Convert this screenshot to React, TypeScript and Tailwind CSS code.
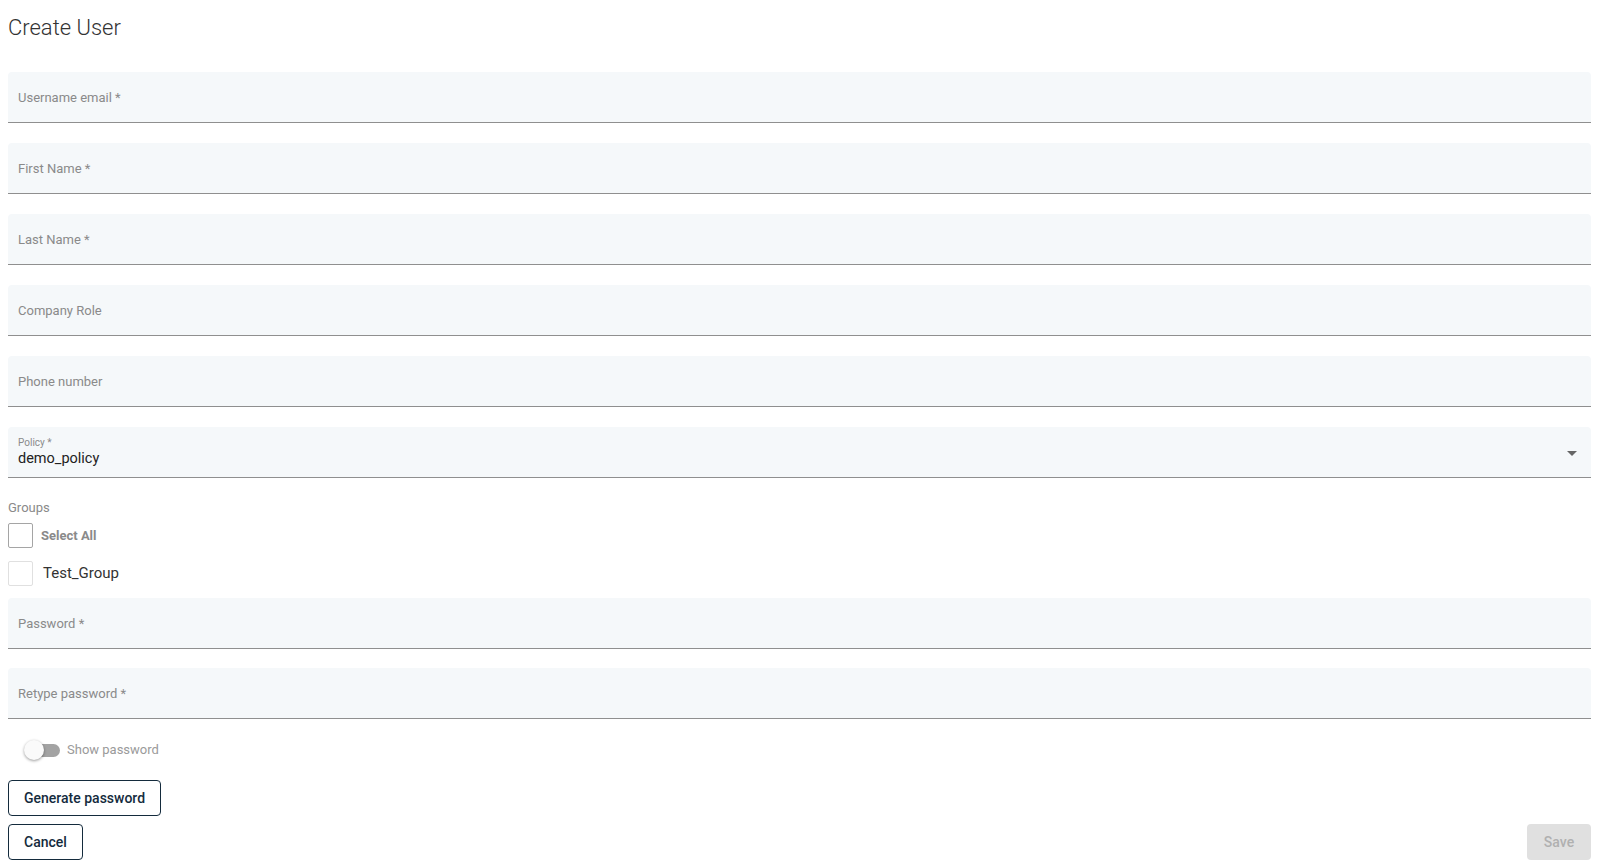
import React from "react";

const font = { fontFamily: "Roboto, 'Liberation Sans', Arial, sans-serif" };

function Field({ label }: { label: string }) {
  return (
    <div className="h-[51px] bg-[#f5f8fa] rounded-t-[4px] border-b border-[#8f8f8f] flex items-center px-[10px]">
      <span className="text-[13px] text-[#8a8a8a] leading-none">{label}</span>
    </div>
  );
}

export default function App() {
  return (
    <div className="bg-white min-h-[868px] pl-2 pr-[14px] pt-[14px]" style={font}>
      <h1 className="text-[22px] font-light text-[#333] leading-[28px] m-0">Create User</h1>
      <div className="mt-[30px] flex flex-col gap-[20px]">
        <Field label="Username email *" />
        <Field label="First Name *" />
        <Field label="Last Name *" />
        <Field label="Company Role" />
        <Field label="Phone number" />
        <div className="h-[51px] bg-[#f5f8fa] rounded-t-[4px] border-b border-[#8f8f8f] flex items-center px-[10px] relative">
          <div className="flex flex-col pt-[2px]">
            <span className="text-[10px] text-[#8a8a8a] leading-[12px]">Policy *</span>
            <span className="text-[14.5px] text-[#222] leading-[20px]">demo_policy</span>
          </div>
          <div className="ml-auto mr-[4px] mt-[3px] w-0 h-0 border-l-[5px] border-r-[5px] border-t-[5px] border-l-transparent border-r-transparent border-t-[#666]" />
        </div>
      </div>
      <div className="mt-[22px] text-[13px] text-[#8a8a8a] leading-[16px]">Groups</div>
      <div className="mt-[7px] flex items-center gap-[8px]">
        <div className="w-[25px] h-[25px] border border-[#a5a5a5] rounded-[2px]" />
        <span className="text-[13px] font-bold text-[#8a8a8a]">Select All</span>
      </div>
      <div className="mt-[13px] flex items-center gap-[10px]">
        <div className="w-[25px] h-[25px] border border-[#e0e0e0] rounded-[2px]" />
        <span className="text-[15px] text-[#333]">Test_Group</span>
      </div>
      <div className="mt-[12px] flex flex-col gap-[19px]">
        <Field label="Password *" />
        <Field label="Retype password *" />
      </div>
      <div className="mt-[21px] h-[20px] flex items-center pl-[16px]">
        <div className="relative w-[36px] h-[20px] flex items-center">
          <div className="absolute left-[4px] right-0 h-[13px] rounded-full bg-[#a3a3a3]" />
          <div className="absolute left-0 w-[20px] h-[20px] rounded-full bg-[#fafafa] shadow-[0_1px_3px_rgba(0,0,0,0.4)]" />
        </div>
        <span className="ml-[7px] text-[13px] text-[#9a9a9a]">Show password</span>
      </div>
      <div className="mt-[20px]">
        <button className="h-[36px] px-[15px] border border-[#142b3d] rounded-[4px] text-[14px] font-medium text-[#142b3d] bg-white">
          Generate password
        </button>
      </div>
      <div className="mt-[8px] flex justify-between">
        <button className="h-[36px] w-[75px] border border-[#142b3d] rounded-[4px] text-[14px] font-medium text-[#142b3d] bg-white">
          Cancel
        </button>
        <button className="h-[36px] w-[64px] rounded-[4px] text-[14px] font-medium text-[#b0b0b0] bg-[#e0e0e0]">
          Save
        </button>
      </div>
    </div>
  );
}
